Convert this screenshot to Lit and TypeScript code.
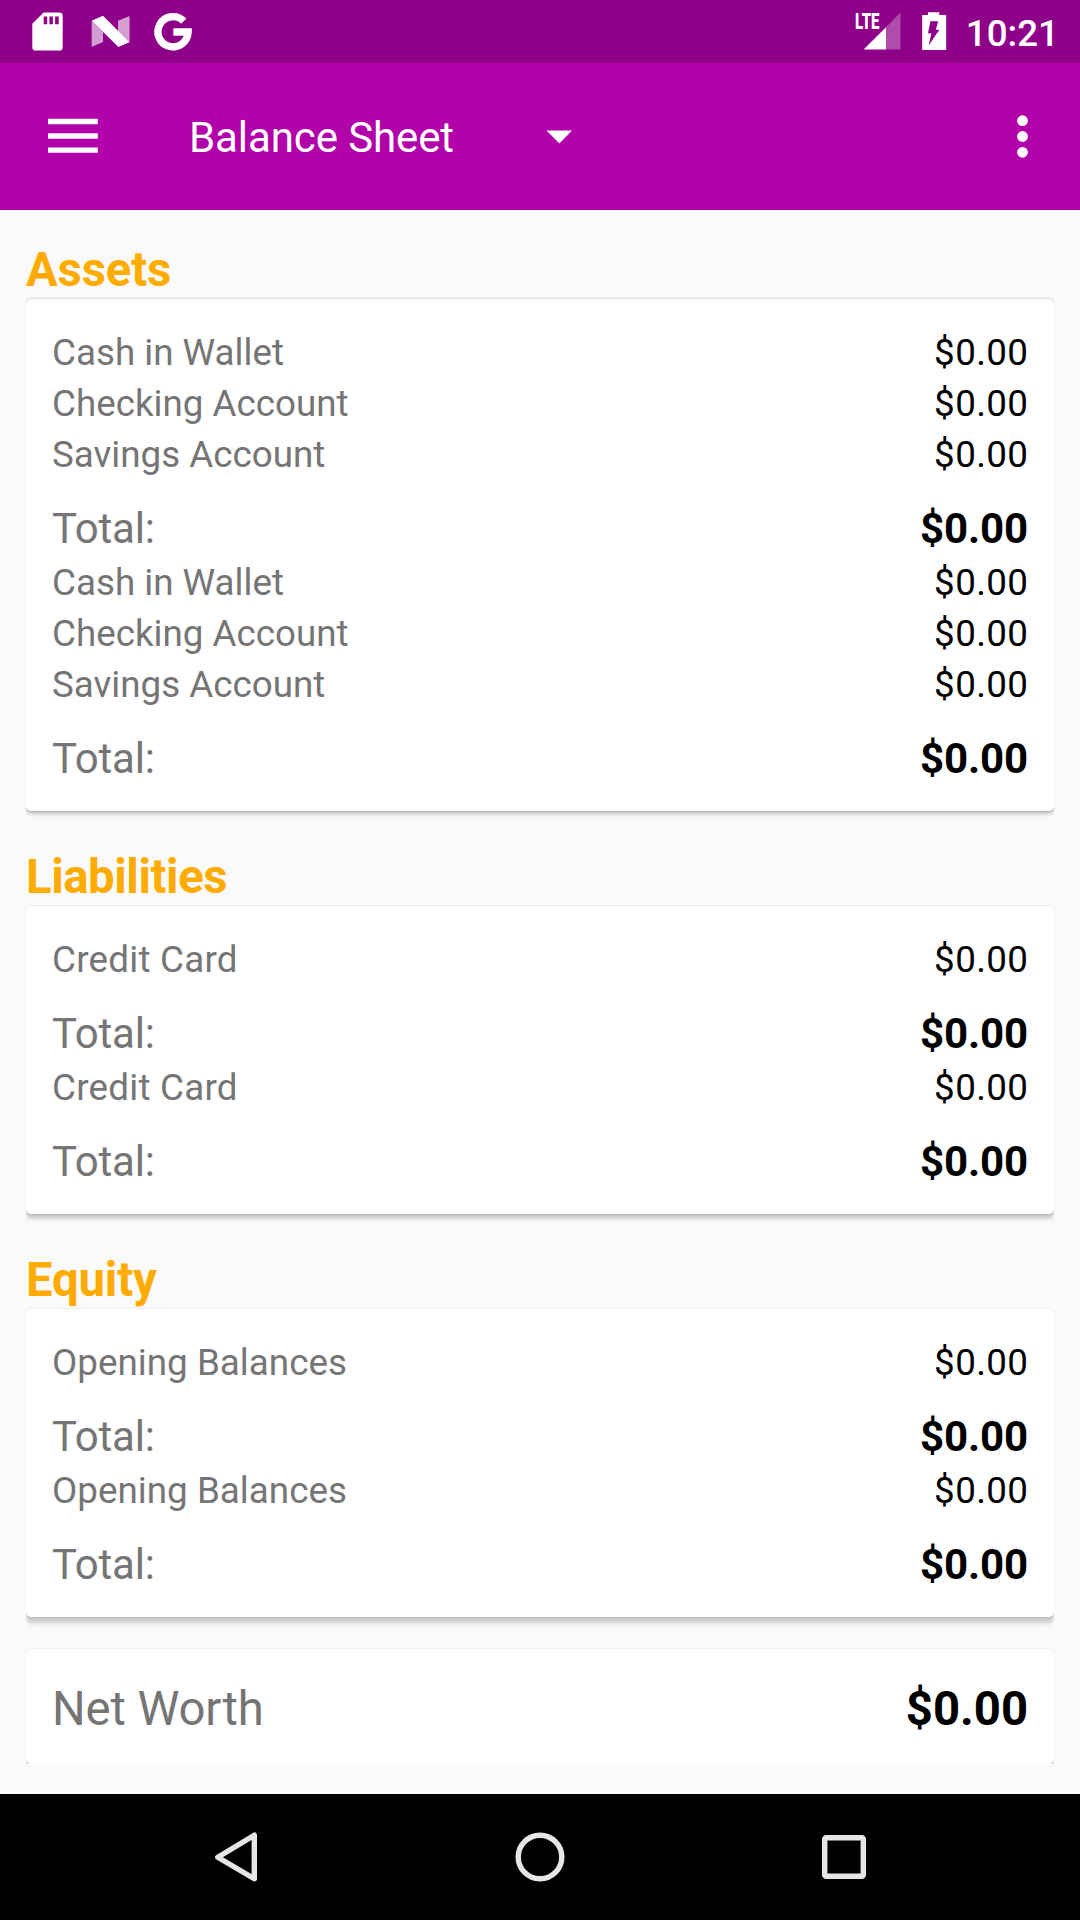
import { LitElement, html, css, svg } from "lit";
import { customElement, property } from "lit/decorators.js";

interface Line {
  label: string;
  amount: string;
}
interface Group {
  lines: Line[];
  total: string;
}
interface Section {
  title: string;
  depth: string;
  groups: Group[];
}

const zero = "$0.00";
const lines = (...labels: string[]): Line[] =>
  labels.map((label) => ({ label, amount: zero }));
const twice = (...labels: string[]): Group[] => [
  { lines: lines(...labels), total: zero },
  { lines: lines(...labels), total: zero },
];

const sections: Section[] = [
  {
    title: "Assets",
    depth: "low",
    groups: twice("Cash in Wallet", "Checking Account", "Savings Account"),
  },
  { title: "Liabilities", depth: "mid", groups: twice("Credit Card") },
  { title: "Equity", depth: "high", groups: twice("Opening Balances") },
];

@customElement("status-bar")
export class StatusBar extends LitElement {
  static styles = css`
    :host {
      display: flex;
      justify-content: space-between;
      height: 63px;
      background: #8e0088;
      color: #fff;
    }
    svg {
      display: block;
    }
    .right {
      display: flex;
      padding-right: 21px;
    }
    .time {
      font: 500 36.75px/63px Roboto, sans-serif;
      padding-top: 2px;
    }
  `;
  render() {
    return html`
      <svg width="210" height="63" viewBox="0 0 210 63" fill="#fff">
        <path
          fill-rule="evenodd"
          d="M43.6 12.4H59.3A3.4 3.4 0 0 1 62.7 15.8V47.2A3.4 3.4 0 0 1 59.3 50.6H35.7A3.4 3.4 0 0 1 32.3 47.2V23.8ZM43.7 16.6V24.2H47.2V16.6ZM49.4 16.6V24.2H52.9V16.6ZM55.1 16.6V24.2H58.7V16.6Z"
        />
        <path fill-opacity=".62" d="M91.7 20.8 103 32V42L91.7 47ZM118 20.8 129.6 16V42.3L118 31Z" />
        <path d="M91.7 20.8 103 15.7 129.5 42.3 118.4 47.1Z" />
        <path
          d="M183.8 21.2A15.1 15.1 0 1 0 188.1 32H173.3"
          fill="none"
          stroke="#fff"
          stroke-width="7.4"
        />
      </svg>
      <div class="right">
        <svg width="116" height="63" viewBox="850 0 116 63" fill="#fff">
          <text
            x="855"
            y="28.8"
            font-family="Roboto, sans-serif"
            font-weight="900"
            font-size="21.5"
            textLength="24.5"
            lengthAdjust="spacingAndGlyphs"
          >LTE</text>
          <path fill-opacity=".3" d="M886 27.3 900.5 12.6V49.6H886Z" />
          <path d="M863.6 49.6 886 27.3V49.6Z" />
          <path
            fill-rule="evenodd"
            d="M928 12.2H939.3V15H946.2V50H922.2V15H928ZM930.4 21.2 928 33.2H931.4L928.6 45.6 939.4 29.8H935.8L938.2 21.2Z"
          />
        </svg>
        <div class="time">10:21</div>
      </div>
    `;
  }
}

@customElement("tool-bar")
export class ToolBar extends LitElement {
  static styles = css`
    :host {
      display: flex;
      align-items: center;
      height: 147px;
      background: #b202aa;
      color: #fff;
    }
    svg {
      display: block;
      flex: none;
    }
    .spinner {
      display: flex;
      align-items: center;
      width: 383px;
      padding-left: 43px;
    }
    .title {
      flex: 1;
      font: 400 42px/49px Roboto, sans-serif;
      letter-spacing: -0.1px;
      padding-top: 1px;
    }
    .more {
      margin-left: auto;
    }
  `;
  render() {
    return html`
      <svg width="146" height="147" viewBox="0 63 146 147" fill="#fff">
        <path d="M48 118.8H97.8V124.2H48ZM48 133.2H97.8V138.7H48ZM48 147.4H97.8V152.8H48Z" />
      </svg>
      <div class="spinner">
        <div class="title">Balance Sheet</div>
        <svg width="26" height="14" viewBox="0 0 26 14" fill="#fff">
          <path d="M0.5 0.4H26L13.3 13.4Z" />
        </svg>
      </div>
      <svg class="more" width="115" height="147" viewBox="965 63 115 147" fill="#fff">
        ${[120.7, 136.5, 152.3].map(
          (y) => svg`<circle cx="1022.5" cy=${y} r="5.4" />`
        )}
      </svg>
    `;
  }
}

@customElement("amount-row")
export class AmountRow extends LitElement {
  @property() kind = "line";
  @property() label = "";
  @property() amount = "";
  static styles = css`
    :host {
      display: block;
      font-family: Roboto, sans-serif;
    }
    .row {
      display: flex;
      justify-content: space-between;
    }
    .label {
      color: #757575;
      letter-spacing: var(--label-tracking, 0);
    }
    .amount {
      color: #000;
    }
    .line {
      padding-top: 4px;
      font-size: 36.75px;
      line-height: 47px;
    }
    .line .amount {
      letter-spacing: 0.4px;
      margin-right: -0.4px;
    }
    .total {
      padding: 26px 0 2px;
      font-size: 42px;
      line-height: 49px;
    }
    .total .label {
      letter-spacing: -0.2px;
    }
    .total .amount {
      letter-spacing: -0.1px;
    }
    .net {
      padding: 7px 0 1px;
      font-size: 47.25px;
      line-height: 55px;
    }
    .net .label {
      letter-spacing: -0.12px;
    }
    .total .amount,
    .net .amount {
      font-weight: 700;
    }
  `;
  render() {
    return html`<div class="row ${this.kind}">
      <span class="label">${this.label}</span>
      <span class="amount">${this.amount}</span>
    </div>`;
  }
}

@customElement("nav-bar")
export class NavBar extends LitElement {
  static styles = css`
    :host {
      display: flex;
      justify-content: center;
      height: 126px;
      background: #000;
    }
    svg {
      display: block;
    }
  `;
  render() {
    return html`
      <svg width="1080" height="126" viewBox="0 1794 1080 126" fill="none" stroke="#e6e6e6">
        <path d="M217.8 1857.2 254.3 1835.2V1878.8Z" stroke-width="5.4" stroke-linejoin="round" />
        <circle cx="540" cy="1857" r="21.8" stroke-width="5.4" />
        <rect x="824.7" y="1837.7" width="38.6" height="38.6" rx="1.5" stroke-width="5.4" />
      </svg>
    `;
  }
}

@customElement("app-root")
export class AppRoot extends LitElement {
  static styles = css`
    :host {
      display: flex;
      flex-direction: column;
      width: 1080px;
      height: 1920px;
      overflow: hidden;
      background: #fafafa;
    }
    .content {
      flex: 1;
      padding: 26px 26px 0;
    }
    .section {
      padding-bottom: 32px;
    }
    .heading {
      margin: 0;
      padding: 7px 0 1px;
      font: 700 47.25px/55px Roboto, sans-serif;
      letter-spacing: -0.15px;
      color: #ffab00;
    }
    .heading.mid {
      letter-spacing: -0.42px;
    }
    .card {
      padding: 26px;
      border-radius: 5px;
      background: #fff;
      clip-path: inset(-6px 0 -14px 0);
    }
    .card.low {
      box-shadow: 0 2px 5px rgba(0, 0, 0, 0.32), 0 0 2px rgba(0, 0, 0, 0.22);
    }
    .card.mid {
      --label-tracking: 0.25px;
      box-shadow: 0 4px 5px rgba(0, 0, 0, 0.25), 0 0 2px rgba(0, 0, 0, 0.18);
    }
    .card.high {
      --label-tracking: 0.03px;
      box-shadow: 0 6px 5px rgba(0, 0, 0, 0.2), 0 0 2px rgba(0, 0, 0, 0.14);
    }
    .card.flat {
      box-shadow: 0 7px 5px rgba(0, 0, 0, 0.2), 0 0 2px rgba(0, 0, 0, 0.14);
      clip-path: inset(-6px 0 0 0);
    }
  `;
  render() {
    return html`
      <status-bar></status-bar>
      <tool-bar></tool-bar>
      <main class="content">
        ${sections.map(
          (s) => html`<section class="section">
            <h2 class="heading ${s.depth}">${s.title}</h2>
            <div class="card ${s.depth}">
              ${s.groups.map(
                (g) => html`
                  ${g.lines.map(
                    (l) => html`<amount-row .label=${l.label} .amount=${l.amount}></amount-row>`
                  )}
                  <amount-row kind="total" label="Total:" .amount=${g.total}></amount-row>
                `
              )}
            </div>
          </section>`
        )}
        <div class="card flat">
          <amount-row kind="net" label="Net Worth" .amount=${zero}></amount-row>
        </div>
      </main>
      <nav-bar></nav-bar>
    `;
  }
}
